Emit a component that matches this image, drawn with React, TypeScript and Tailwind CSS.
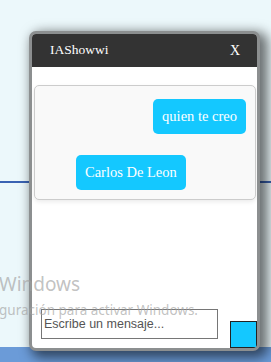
export default function App() {
  return (
    <div className="relative w-[271px] h-[362px] overflow-hidden bg-[#ecf8fb]">
      {/* desktop decorations */}
      <div className="absolute left-0 top-[181px] w-full h-[2px] bg-[#3a63b3]" />
      <div className="absolute left-0 bottom-0 w-full h-[15px] bg-[#6b9bd8]" />

      {/* chat window */}
      <div className="absolute left-[29px] top-[31px] w-[231px] h-[320px] border-[3px] border-[#8c8f90] rounded-[7px] bg-white shadow-[5px_4px_12px_3px_rgba(0,0,0,0.55)] flex flex-col overflow-hidden">
        <div className="h-[33px] shrink-0 bg-[#333333] flex items-center justify-between pl-[18px] pr-[17px] text-white text-[13.5px] font-['Liberation_Serif',serif]">
          <span>IAShowwi</span>
          <span className="text-[14px]">X</span>
        </div>

        <div className="mt-[18px] ml-[2px] mr-[1px] h-[115px] shrink-0 border border-[#cccccc] rounded-[5px] bg-[#f9f9f9] shadow-[0_2px_4px_rgba(0,0,0,0.08)] flex flex-col font-['Liberation_Serif',serif] text-[14.5px] text-white">
          <div className="self-end mt-[13px] mr-[9px] h-[35px] px-[9px] flex items-center rounded-[5px] bg-[#14c8ff]">
            quien te creo
          </div>
          <div className="self-start mt-[21px] ml-[41px] h-[35px] px-[9px] flex items-center rounded-[5px] bg-[#14c8ff]">
            Carlos De Leon
          </div>
        </div>

        <div className="flex-1" />

        <div className="flex items-end">
          <input
            placeholder="Escribe un mensaje..."
            className="ml-[9px] mb-[9px] w-[177px] h-[30px] border border-[#767676] pl-[2px] text-[12.5px] font-['Liberation_Sans',sans-serif] placeholder:text-[#555555] outline-none"
          />
          <button className="ml-auto w-[27px] h-[27px] border border-[#222222] bg-[#14c8ff]" />
        </div>
      </div>

      {/* activation watermark */}
      <div className="absolute left-[-1px] top-[275px] pointer-events-none font-['Noto_Sans',sans-serif] text-[#a0a0a0]/65 leading-none">
        <div className="text-[19px]">Windows</div>
        <div className="text-[13.5px] mt-[10px]">guración para activar Windows.</div>
      </div>
    </div>
  );
}
